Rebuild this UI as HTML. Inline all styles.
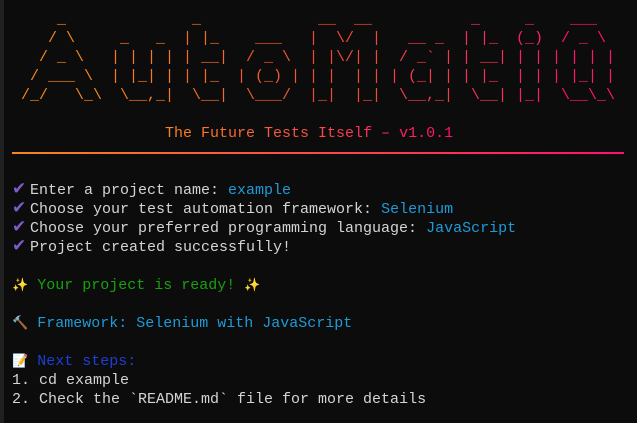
<!DOCTYPE html>
<html><head><meta charset="utf-8"><style>
html,body{margin:0;padding:0;background:#0c0c0c;width:637px;height:423px;overflow:hidden}
.edge{position:absolute;left:0;top:0;width:4px;height:423px;background:#202020}
pre{position:absolute;top:10px;margin:0;font-family:"Liberation Mono",monospace;font-size:15px;line-height:19px;color:#d4d4d4;white-space:pre}
.main{left:12px}
.tag{background:linear-gradient(90deg,#f7861f,#ff0f72);-webkit-background-clip:text;background-clip:text;color:transparent}
.div{position:absolute;left:12px;top:152px;width:612px;height:2px;background:linear-gradient(90deg,#f7861f,#ff0f72)}
.chk{color:#7b5cc8;display:inline-block;width:18px;font-family:"DejaVu Sans",sans-serif;font-size:17px;line-height:15px}
.b{color:#1e9bd7}
.g{color:#16a10e}
.n{color:#1c3fd8}
.e{font-family:"DejaVu Sans",sans-serif;font-size:13px}
</style></head><body>
<div class="edge"></div>
<div class="div"></div>
<pre style="left:21px;color:#f7861f">    _
   / \
  / _ \
 / ___ \
/_/   \_\</pre>
<pre style="left:111px;color:#f57a22"> 
 _   _
| | | |
| |_| |
 \__,_|</pre>
<pre style="left:183px;color:#f26b28"> _
| |_
| __|
| |_
 \__|</pre>
<pre style="left:237px;color:#ef5a2e"> 
  ___
 / _ \
| (_) |
 \___/</pre>
<pre style="left:309px;color:#ee4a38"> __  __
|  \/  |
| |\/| |
| |  | |
|_|  |_|</pre>
<pre style="left:390px;color:#f03d48"> 
  __ _
 / _` |
| (_| |
 \__,_|</pre>
<pre style="left:462px;color:#f52f55"> _
| |_
| __|
| |_
 \__|</pre>
<pre style="left:516px;color:#fa2063"> _
(_)
| |
| |
|_|</pre>
<pre style="left:552px;color:#ff1570">  ___
 / _ \
| | | |
| |_| |
 \__\_\</pre>
<pre class="main"> 





                 <span class="tag">The Future Tests Itself – v1.0.1</span>


<span class="chk">✔</span>Enter a project name: <span class="b">example</span>
<span class="chk">✔</span>Choose your test automation framework: <span class="b">Selenium</span>
<span class="chk">✔</span>Choose your preferred programming language: <span class="b">JavaScript</span>
<span class="chk">✔</span>Project created successfully!

<span class="e" style="color:#f5c842">✨</span> <span class="g">Your project is ready!</span> <span class="e" style="color:#f5c842">✨</span>

<span class="e" style="color:#8a6a55">🔨</span> <span class="b">Framework: Selenium with JavaScript</span>

<span class="e" style="color:#e8e8e8">📝</span> <span class="n">Next steps:</span>
1. cd example
2. Check the `README.md` file for more details</pre>
</body></html>
